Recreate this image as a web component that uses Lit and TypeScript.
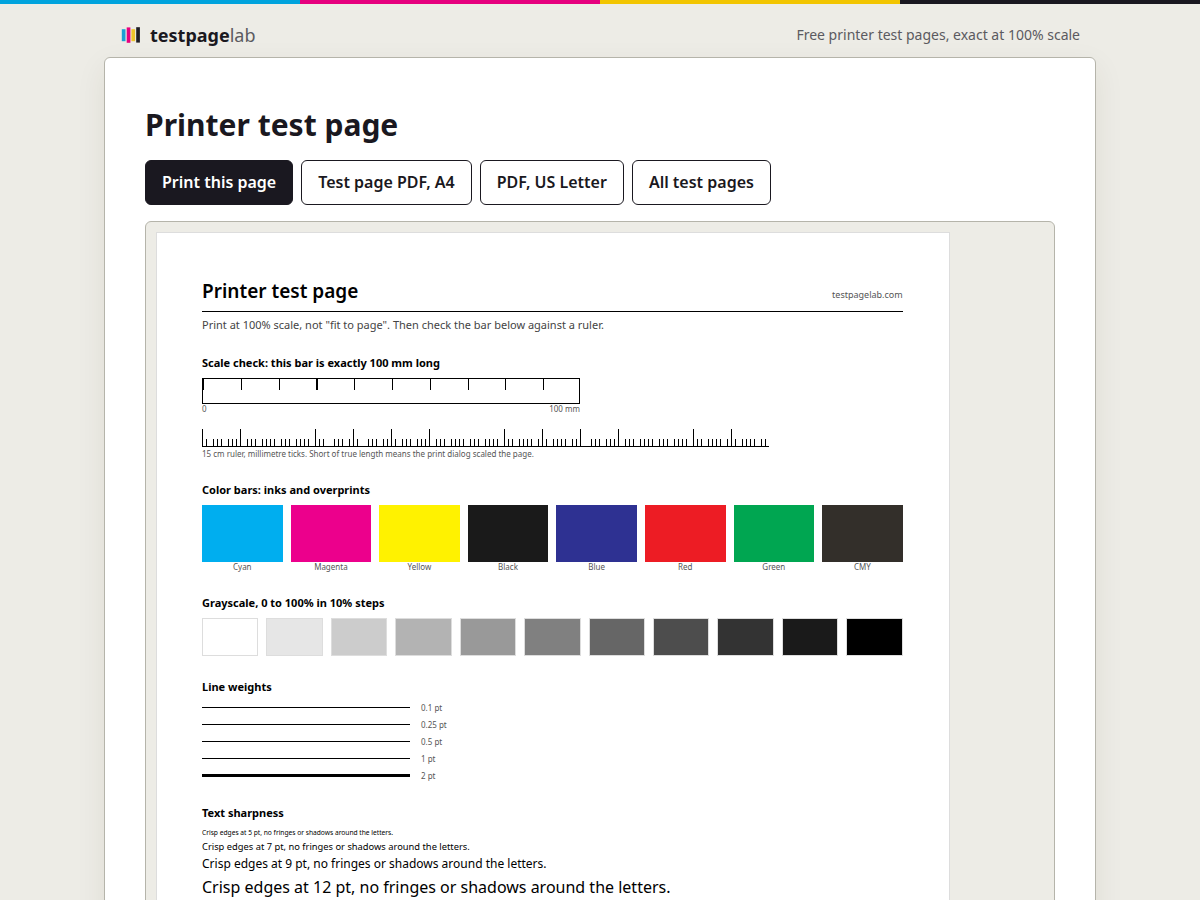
import { LitElement, html, css } from "lit";
import { customElement } from "lit/decorators.js";

const INKS = [
  { name: "Cyan", color: "#00aeef" },
  { name: "Magenta", color: "#ec008c" },
  { name: "Yellow", color: "#fff200" },
  { name: "Black", color: "#1a1a1a" },
  { name: "Blue", color: "#2e3192" },
  { name: "Red", color: "#ed1c24" },
  { name: "Green", color: "#00a651" },
  { name: "CMY", color: "#332f2a" },
];

const GRAYS = ["#fff", "#e6e6e6", "#ccc", "#b3b3b3", "#999", "#808080", "#666", "#4d4d4d", "#333", "#1a1a1a", "#000"];

const LINES = [
  { label: "0.1 pt", px: 1 },
  { label: "0.25 pt", px: 1 },
  { label: "0.5 pt", px: 1 },
  { label: "1 pt", px: 1 },
  { label: "2 pt", px: 3 },
];

@customElement("test-sheet")
export class TestSheet extends LitElement {
  static styles = css`
    :host {
      display: block;
      box-sizing: border-box;
      width: 210mm;
      min-height: 297mm;
      padding: 45px 46px 45px 45px;
      background: #fff;
      border: 1px solid #ddd;
      color: #000;
    }
    * { box-sizing: border-box; }
    h2, h3, p { margin: 0; }
    .head {
      display: flex;
      justify-content: space-between;
      align-items: baseline;
      padding-bottom: 6px;
      border-bottom: 1px solid #000;
    }
    h2 { font-size: 19px; line-height: 27px; font-weight: 600; }
    .site { font-size: 9px; line-height: 14px; color: #555; }
    .note { margin-top: 5px; font-size: 11px; line-height: 16px; color: #444; }
    section { margin-top: 22px; }
    section + section { margin-top: 23px; }
    h3 { font-size: 11px; line-height: 16px; font-weight: 700; margin-bottom: 7px; }
    .caption { font-size: 8px; line-height: 10px; color: #555; }
    .bar {
      width: 100mm;
      height: 26px;
      border: 1px solid #000;
      background: repeating-linear-gradient(to right, #000 0 0.3mm, transparent 0.3mm 10mm) no-repeat;
      background-size: 100% 11px;
    }
    .ends { display: flex; justify-content: space-between; width: 100mm; }
    .ruler {
      margin: 15px 0 2px;
      width: 150mm;
      height: 18px;
      border-bottom: 1px solid #000;
      background:
        repeating-linear-gradient(to right, #000 0 0.2mm, transparent 0.2mm 10mm) left bottom / 100% 17px no-repeat,
        repeating-linear-gradient(to right, #000 0 0.2mm, transparent 0.2mm 1mm) left bottom / 100% 7px no-repeat;
    }
    .inks, .grays { display: grid; gap: 8px; }
    .inks { grid-template-columns: repeat(8, 1fr); text-align: center; }
    .ink { height: 57px; }
    .grays { grid-template-columns: repeat(11, 1fr); }
    .gray { height: 38px; border: 1px solid #ddd; }
    .lines { display: grid; gap: 6px; padding-bottom: 1px; }
    .line { display: flex; align-items: center; gap: 11px; height: 11px; }
    .stroke { width: 208px; background: #000; }
    .sample { line-height: 1.4; margin-bottom: 3px; }
  `;

  render() {
    return html`
      <div class="head"><h2>Printer test page</h2><span class="site">testpagelab.com</span></div>
      <p class="note">Print at 100% scale, not "fit to page". Then check the bar below against a ruler.</p>
      <section>
        <h3>Scale check: this bar is exactly 100 mm long</h3>
        <div class="bar"></div>
        <div class="ends caption"><span>0</span><span>100 mm</span></div>
        <div class="ruler"></div>
        <p class="caption">15 cm ruler, millimetre ticks. Short of true length means the print dialog scaled the page.</p>
      </section>
      <section>
        <h3>Color bars: inks and overprints</h3>
        <div class="inks">
          ${INKS.map((i) => html`<div><div class="ink" style="background:${i.color}"></div><div class="caption">${i.name}</div></div>`)}
        </div>
      </section>
      <section>
        <h3>Grayscale, 0 to 100% in 10% steps</h3>
        <div class="grays">${GRAYS.map((g) => html`<div class="gray" style="background:${g}"></div>`)}</div>
      </section>
      <section>
        <h3>Line weights</h3>
        <div class="lines">
          ${LINES.map((l) => html`<div class="line"><div class="stroke" style="height:${l.px}px"></div><span class="caption">${l.label}</span></div>`)}
        </div>
      </section>
      <section>
        <h3>Text sharpness</h3>
        ${[5, 7, 9, 12].map((pt) => html`<p class="sample" style="font-size:${pt}pt">Crisp edges at ${pt} pt, no fringes or shadows around the letters.</p>`)}
      </section>
    `;
  }
}

@customElement("app-root")
export class AppRoot extends LitElement {
  static styles = css`
    :host {
      display: block;
      min-height: 100vh;
      background: #edece6;
      color: #1a1820;
      font-family: "Noto Sans", sans-serif;
    }
    * { box-sizing: border-box; }
    .inkbar {
      height: 4px;
      background: linear-gradient(to right, #00a3dd 0 25%, #e6007e 25% 50%, #f2c500 50% 75%, #1a1820 75%);
    }
    header {
      display: flex;
      justify-content: space-between;
      align-items: center;
      max-width: 992px;
      height: 53px;
      margin: 0 auto;
      padding: 8px 16px 0;
    }
    .brand {
      display: flex;
      align-items: center;
      gap: 8px;
      color: inherit;
      text-decoration: none;
      font-size: 18px;
      font-weight: 700;
    }
    .brand svg { display: block; }
    .thin { font-weight: 400; color: #5b5a60; }
    .tagline { margin: 0; font-size: 14px; line-height: 20px; color: #5b5a60; }
    main {
      max-width: 992px;
      margin: 0 auto 40px;
      padding: 40px;
      background: #fff;
      border: 1px solid #b5b4aa;
      border-radius: 6px;
      box-shadow: 0 10px 30px rgba(60, 50, 20, 0.08);
    }
    h1 { margin: 5px 0 14px; font-size: 30px; line-height: 43px; font-weight: 700; }
    .actions { display: flex; flex-wrap: wrap; gap: 8px; }
    .btn {
      padding: 0 16px;
      border: 1px solid #1a1820;
      border-radius: 6px;
      background: #fff;
      color: #1a1820;
      font: 600 16px/43px "Noto Sans", sans-serif;
      text-decoration: none;
      cursor: pointer;
    }
    .primary { background: #1a1820; color: #fff; }
    .preview {
      margin-top: 16px;
      padding: 10px;
      overflow-x: auto;
      background: #edece6;
      border: 1px solid #b5b4aa;
      border-radius: 6px;
    }
  `;

  render() {
    return html`
      <div class="inkbar"></div>
      <header>
        <a class="brand" href="#">
          <svg width="22" height="20" viewBox="0 0 22 20" aria-hidden="true">
            <rect x="1.8" y="4.2" width="3.7" height="12" fill="#1d9fd3" />
            <rect x="6.7" y="2.4" width="3.7" height="15.4" fill="#e6007e" />
            <rect x="11.4" y="4.2" width="3.7" height="12" fill="#efc42a" />
            <rect x="16.2" y="2.2" width="3.7" height="15.4" fill="#1f1d25" />
          </svg>
          <span>testpage<span class="thin">lab</span></span>
        </a>
        <p class="tagline">Free printer test pages, exact at 100% scale</p>
      </header>
      <main>
        <h1>Printer test page</h1>
        <div class="actions">
          <button class="btn primary" type="button" @click=${() => window.print()}>Print this page</button>
          <a class="btn" href="#a4">Test page PDF, A4</a>
          <a class="btn" href="#letter">PDF, US Letter</a>
          <a class="btn" href="#all">All test pages</a>
        </div>
        <div class="preview"><test-sheet></test-sheet></div>
      </main>
    `;
  }
}
